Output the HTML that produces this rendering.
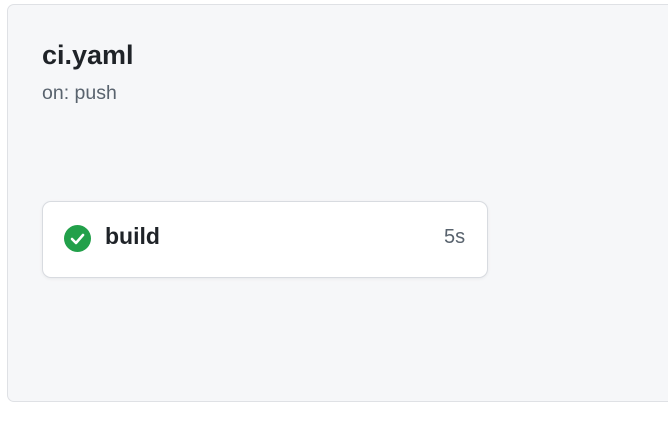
<!DOCTYPE html>
<html><head><style>
body{margin:0;width:668px;height:425px;background:#fff;font-family:"Liberation Sans",sans-serif;overflow:hidden;position:relative}
.box{position:absolute;left:7px;top:4px;width:680px;height:396px;background:#f6f7f9;border:1px solid #dfe1e5;border-radius:7px}
.t{position:absolute;left:42px;top:40px;font-size:27px;font-weight:bold;color:#1f2328}
.s{position:absolute;left:42px;top:82px;font-size:19.5px;color:#59636e}
.card{position:absolute;left:42px;top:201px;width:444px;height:75px;background:#fff;border:1px solid #d8dbe0;border-radius:9px;box-shadow:0 1px 3px rgba(0,0,0,.06)}
.ic{position:absolute;left:64px;top:225px}
.b{position:absolute;left:105px;top:223px;font-size:23px;font-weight:bold;color:#1f2328}
.d{position:absolute;left:444px;top:226px;font-size:20px;color:#59636e}
</style></head><body>
<div class="box"></div>
<div class="t">ci.yaml</div>
<div class="s">on: push</div>
<div class="card"></div>
<svg class="ic" width="27" height="27" viewBox="0 0 27 27"><circle cx="13.5" cy="13.5" r="13.5" fill="#22a04a"/><path d="M8 14l4 4 7-8" stroke="#fff" stroke-width="2.6" fill="none" stroke-linecap="round" stroke-linejoin="round"/></svg>
<div class="b">build</div>
<div class="d">5s</div>
</body></html>
